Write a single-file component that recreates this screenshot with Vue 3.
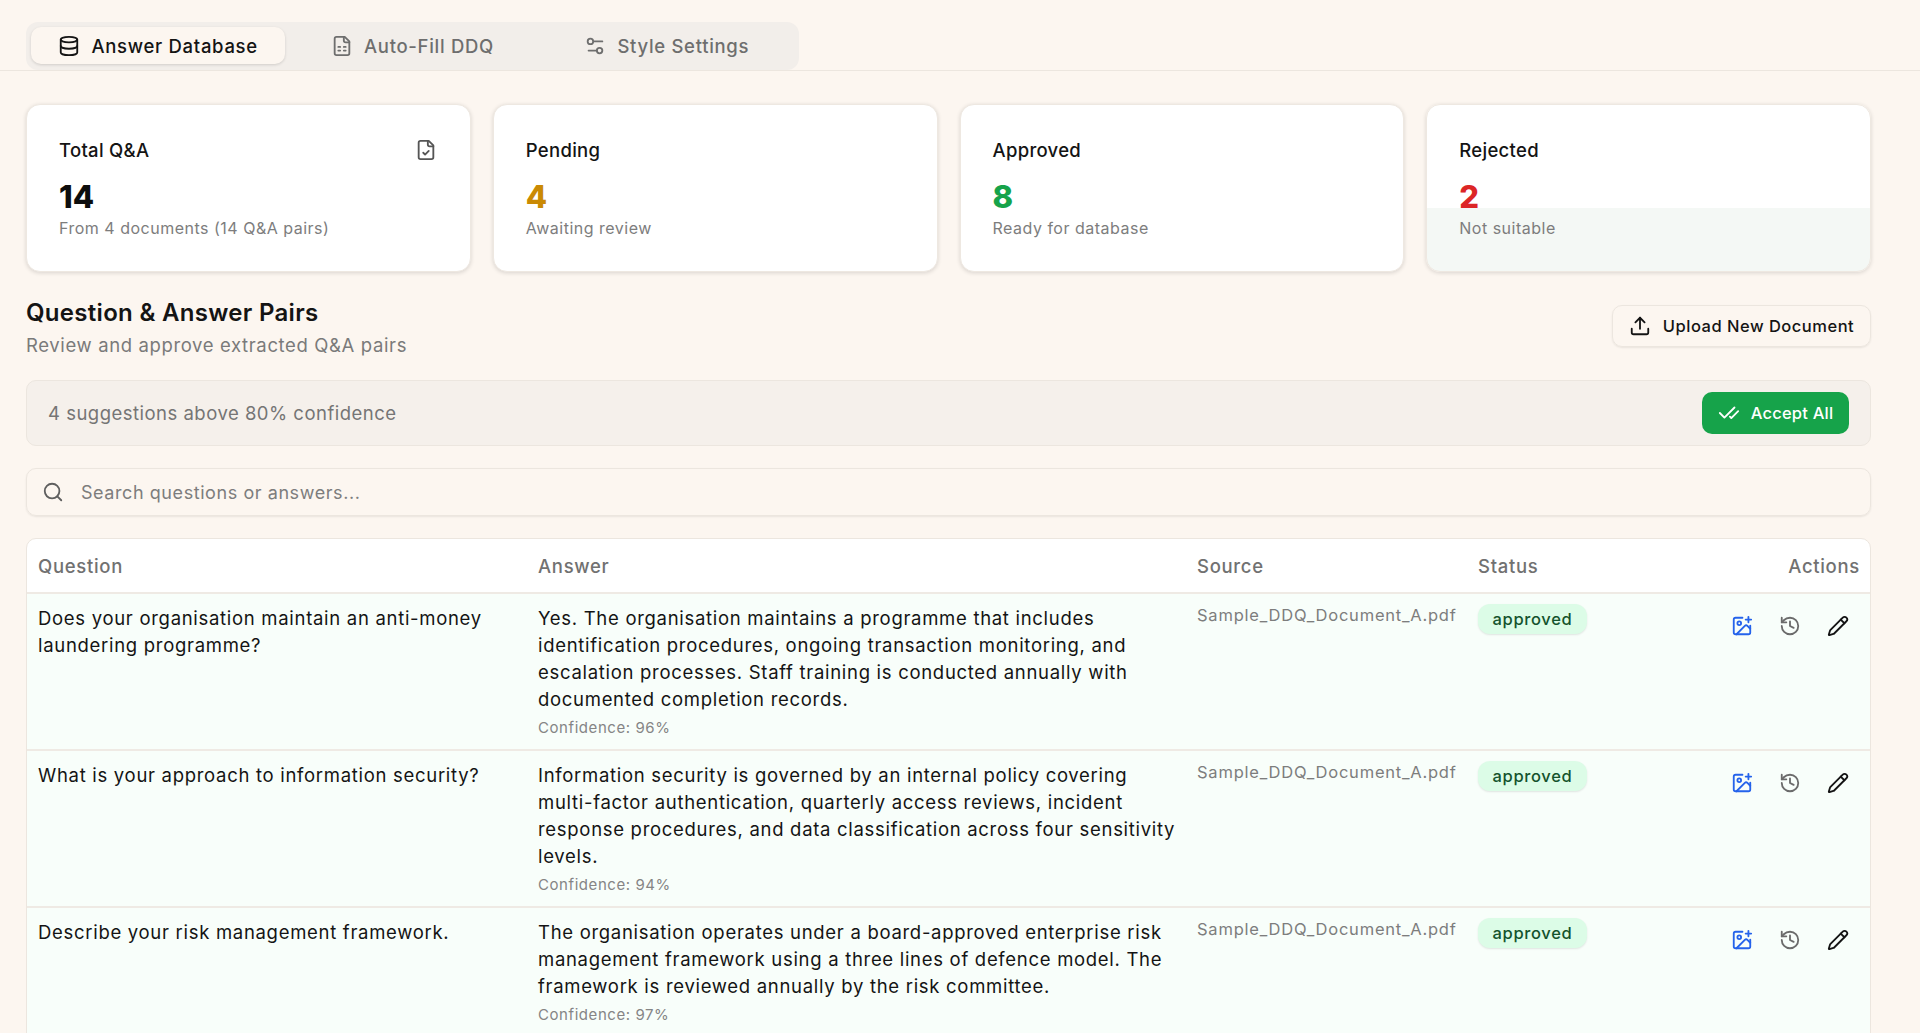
<template>
  <div class="page">
    <div class="tabbar">
      <div class="tabs">
        <button class="tab tab--active">
          <svg class="icon" viewBox="0 0 24 24"><ellipse cx="12" cy="5" rx="9" ry="3" /><path d="M3 5V19A9 3 0 0 0 21 19V5" /><path d="M3 12A9 3 0 0 0 21 12" /></svg>
          Answer Database
        </button>
        <button class="tab">
          <svg class="icon" viewBox="0 0 24 24"><path d="M15 2H6a2 2 0 0 0-2 2v16a2 2 0 0 0 2 2h12a2 2 0 0 0 2-2V7Z" /><path d="M14 2v4a2 2 0 0 0 2 2h4" /><path d="M8 13h2M14 13h2M8 17h2M14 17h2" /></svg>
          Auto-Fill DDQ
        </button>
        <button class="tab">
          <svg class="icon" viewBox="0 0 24 24"><path d="M20 7h-9M14 17H5" /><circle cx="17" cy="17" r="3" /><circle cx="7" cy="7" r="3" /></svg>
          Style Settings
        </button>
      </div>
    </div>

    <main class="content">
      <section class="stats">
        <div v-for="s in stats" :key="s.label" class="stat" :class="{ 'stat--tinted': s.tinted }">
          <div class="stat__head">
            <span>{{ s.label }}</span>
            <svg v-if="s.icon" class="icon stat__icon" viewBox="0 0 24 24"><path d="M15 2H6a2 2 0 0 0-2 2v16a2 2 0 0 0 2 2h12a2 2 0 0 0 2-2V7Z" /><path d="M14 2v4a2 2 0 0 0 2 2h4" /><path d="m9 15 2 2 4-4" /></svg>
          </div>
          <div class="stat__value" :style="{ color: s.color }">{{ s.value }}</div>
          <div class="stat__sub">{{ s.sub }}</div>
        </div>
      </section>

      <div class="section-head">
        <div>
          <h2>Question &amp; Answer Pairs</h2>
          <p>Review and approve extracted Q&amp;A pairs</p>
        </div>
        <button class="upload">
          <svg class="icon" viewBox="0 0 24 24"><path d="M21 15v4a2 2 0 0 1-2 2H5a2 2 0 0 1-2-2v-4" /><path d="M17 8l-5-5-5 5" /><path d="M12 3v12" /></svg>
          Upload New Document
        </button>
      </div>

      <div class="banner">
        <span>4 suggestions above 80% confidence</span>
        <button class="accept">
          <svg class="icon" viewBox="0 0 24 24"><path d="M18 6 7 17l-5-5" /><path d="m22 10-7.5 7.5L13 16" /></svg>
          Accept All
        </button>
      </div>

      <div class="search">
        <svg class="icon" viewBox="0 0 24 24"><circle cx="11" cy="11" r="8" /><path d="m21 21-4.3-4.3" /></svg>
        <span>Search questions or answers...</span>
      </div>

      <div class="table-wrap">
        <table>
          <colgroup>
            <col style="width: 500px" />
            <col style="width: 659px" />
            <col style="width: 281px" />
            <col style="width: 233px" />
            <col />
          </colgroup>
          <thead>
            <tr>
              <th>Question</th>
              <th>Answer</th>
              <th>Source</th>
              <th>Status</th>
              <th class="right">Actions</th>
            </tr>
          </thead>
          <tbody>
            <tr v-for="r in rows" :key="r.q">
              <td>{{ r.q }}</td>
              <td class="answer">
                <div v-for="line in r.a" :key="line">{{ line }}</div>
                <div class="confidence">Confidence: {{ r.conf }}%</div>
              </td>
              <td class="source">Sample_DDQ_Document_A.pdf</td>
              <td><span class="badge">approved</span></td>
              <td class="right">
                <div class="actions">
                  <button class="act act--blue">
                    <svg class="icon" viewBox="0 0 24 24"><path d="M16 5h6M19 2v6" /><path d="M21 11.5V19a2 2 0 0 1-2 2H5a2 2 0 0 1-2-2V5a2 2 0 0 1 2-2h7.5" /><path d="m21 15-3.086-3.086a2 2 0 0 0-2.828 0L6 21" /><circle cx="9" cy="9" r="2" /></svg>
                  </button>
                  <button class="act act--gray">
                    <svg class="icon" viewBox="0 0 24 24"><path d="M3 12a9 9 0 1 0 9-9 9.75 9.75 0 0 0-6.74 2.74L3 8" /><path d="M3 3v5h5" /><path d="M12 7v5l4 2" /></svg>
                  </button>
                  <button class="act">
                    <svg class="icon" viewBox="0 0 24 24"><path d="M21.174 6.812a1 1 0 0 0-3.986-3.987L3.842 16.174a2 2 0 0 0-.5.83l-1.321 4.352a.5.5 0 0 0 .623.622l4.353-1.32a2 2 0 0 0 .83-.497z" /><path d="m15 5 4 4" /></svg>
                  </button>
                </div>
              </td>
            </tr>
          </tbody>
        </table>
      </div>
    </main>
  </div>
</template>

<script setup>
const stats = [
  { label: 'Total Q&A', value: 14, sub: 'From 4 documents (14 Q&A pairs)', color: '#0d0d0d', icon: true },
  { label: 'Pending', value: 4, sub: 'Awaiting review', color: '#ca8a04' },
  { label: 'Approved', value: 8, sub: 'Ready for database', color: '#16a34a' },
  { label: 'Rejected', value: 2, sub: 'Not suitable', color: '#dc2626', tinted: true },
];

// answers are split by line so they break where the original does
const rows = [
  {
    q: 'Does your organisation maintain an anti-money laundering programme?',
    a: [
      'Yes. The organisation maintains a programme that includes',
      'identification procedures, ongoing transaction monitoring, and',
      'escalation processes. Staff training is conducted annually with',
      'documented completion records.',
    ],
    conf: 96,
  },
  {
    q: 'What is your approach to information security?',
    a: [
      'Information security is governed by an internal policy covering',
      'multi-factor authentication, quarterly access reviews, incident',
      'response procedures, and data classification across four sensitivity',
      'levels.',
    ],
    conf: 94,
  },
  {
    q: 'Describe your risk management framework.',
    a: [
      'The organisation operates under a board-approved enterprise risk',
      'management framework using a three lines of defence model. The',
      'framework is reviewed annually by the risk committee.',
    ],
    conf: 97,
  },
];
</script>

<style>
html,
body {
  margin: 0;
  background: #fcf6f0;
  overflow: hidden;
}
</style>

<style scoped>
.page {
  height: 1033px;
  overflow: hidden;
  background: #fcf6f0;
  font-family: Inter, 'Liberation Sans', sans-serif;
  color: #141414;
}

button {
  font: inherit;
  border: none;
  background: none;
  color: inherit;
  padding: 0;
}

.icon {
  width: 22px;
  height: 22px;
  flex-shrink: 0;
  fill: none;
  stroke: currentColor;
  stroke-width: 2;
  stroke-linecap: round;
  stroke-linejoin: round;
}

.tabbar {
  height: 71px;
  box-sizing: border-box;
  padding: 22px 0 0 26px;
  border-bottom: 1px solid #ece6df;
}

.tabs {
  width: 773px;
  height: 48px;
  box-sizing: border-box;
  padding: 5px;
  display: grid;
  grid-template-columns: repeat(3, 1fr);
  background: #f2eeea;
  border-radius: 12px;
}

.tab {
  height: 37px;
  display: flex;
  align-items: center;
  justify-content: center;
  gap: 11px;
  font-size: 18.5px;
  letter-spacing: 0.7px;
  font-weight: 500;
  color: #6e6e6e;
  border-radius: 10px;
}

.tab--active {
  background: #fcf6f0;
  color: #141414;
  box-shadow: 0 1px 3px rgba(0, 0, 0, 0.14);
}

.content {
  width: 1845px;
  margin-left: 26px;
  padding-top: 33px;
}

.stats {
  display: grid;
  grid-template-columns: repeat(4, 1fr);
  gap: 22px;
}

.stat {
  height: 168px;
  box-sizing: border-box;
  padding: 33px 33px 0 32px;
  background: #fff;
  border: 1px solid #eee8e1;
  border-radius: 14px;
  box-shadow: 0 1px 4px rgba(0, 0, 0, 0.14);
}

.stat--tinted {
  background: linear-gradient(#fff 103px, #f4f8f5 103px);
}

.stat__head {
  display: flex;
  justify-content: space-between;
  align-items: center;
  height: 24px;
  font-size: 18.5px;
  font-weight: 500;
  letter-spacing: 0.3px;
}

.stat__icon {
  color: #555;
}

.stat__value {
  margin-top: 16px;
  font-size: 31px;
  line-height: 38px;
  font-weight: 800;
}

.stat__sub {
  margin-top: 1.5px;
  font-size: 16px;
  letter-spacing: 0.5px;
  color: #7d7d7d;
}

.section-head {
  height: 108px;
  box-sizing: border-box;
  padding-top: 25px;
  display: flex;
  justify-content: space-between;
}

h2 {
  margin: 0;
  font-size: 24px;
  line-height: 32px;
  font-weight: 600;
  letter-spacing: 0.3px;
}

.section-head p {
  margin: 1px 0 0;
  font-size: 18.5px;
  line-height: 30px;
  letter-spacing: 0.63px;
  color: #7a7a7a;
}

.upload {
  width: 259px;
  height: 42px;
  margin-top: 8px;
  display: flex;
  align-items: center;
  justify-content: center;
  gap: 12px;
  font-size: 16.5px;
  font-weight: 500;
  letter-spacing: 0.5px;
  border: 1px solid #ece6df;
  border-radius: 10px;
  box-shadow: 0 1px 2px rgba(0, 0, 0, 0.08);
}

.banner {
  height: 66px;
  box-sizing: border-box;
  padding: 0 21px;
  display: flex;
  align-items: center;
  justify-content: space-between;
  background: #f5f0eb;
  border: 1px solid #ece6df;
  border-radius: 10px;
  font-size: 18.5px;
  letter-spacing: 0.49px;
  color: #757575;
}

.accept {
  width: 147px;
  height: 42px;
  display: flex;
  align-items: center;
  justify-content: center;
  gap: 11px;
  background: #16a34a;
  color: #fff;
  border-radius: 10px;
  font-size: 16.5px;
  font-weight: 500;
  letter-spacing: 0.2px;
}

.search {
  height: 48px;
  box-sizing: border-box;
  margin-top: 22px;
  padding: 0 15px;
  display: flex;
  align-items: center;
  gap: 17px;
  border: 1px solid #ece6df;
  border-radius: 10px;
  box-shadow: 0 1px 2px rgba(0, 0, 0, 0.08);
  font-size: 18px;
  letter-spacing: 0.57px;
  color: #7d7d7d;
}

.search .icon {
  color: #5f5f5f;
}

.table-wrap {
  margin-top: 22px;
  background: #fff;
  border: 1px solid #ece6df;
  border-radius: 10px 10px 0 0;
  overflow: hidden;
}

table {
  width: 100%;
  table-layout: fixed;
  border-collapse: collapse;
}

th {
  height: 53px;
  padding: 0 11px;
  text-align: left;
  font-size: 18.5px;
  font-weight: 500;
  letter-spacing: 0.7px;
  color: #717171;
}

td {
  padding: 11px 11px 11px;
  vertical-align: top;
  font-size: 18.5px;
  line-height: 27px;
  letter-spacing: 0.7px;
  background: #f8fefa;
}

.answer {
  padding-right: 0;
  white-space: nowrap;
}

tr {
  border-top: 2px solid #efeae4;
}

thead tr {
  border-top: none;
}

th.right,
td.right {
  text-align: right;
  padding-right: 10px;
  padding-left: 0;
}

.confidence {
  margin-top: 5px;
  font-size: 15px;
  line-height: 20px;
  letter-spacing: 0.57px;
  color: #858585;
}

.source {
  font-size: 16.5px;
  line-height: 20px;
  letter-spacing: 0.78px;
  color: #7d7d7d;
  white-space: nowrap;
  padding-right: 0;
}

.badge {
  display: inline-block;
  height: 30px;
  width: 109px;
  margin-top: -1px;
  box-sizing: border-box;
  text-align: center;
  line-height: 30px;
  vertical-align: top;
  background: #dcfce7;
  color: #14532d;
  border-radius: 12px;
  font-size: 16.5px;
  font-weight: 500;
  letter-spacing: 0.66px;
  box-shadow: 0 1px 2px rgba(0, 0, 0, 0.1);
}

.actions {
  display: flex;
  justify-content: flex-end;
  gap: 4px;
}

.act {
  width: 44px;
  height: 42px;
  display: flex;
  align-items: center;
  justify-content: center;
  color: #141414;
}

.act--blue {
  color: #2563eb;
}

.act--gray {
  color: #6b6b6b;
}
</style>
